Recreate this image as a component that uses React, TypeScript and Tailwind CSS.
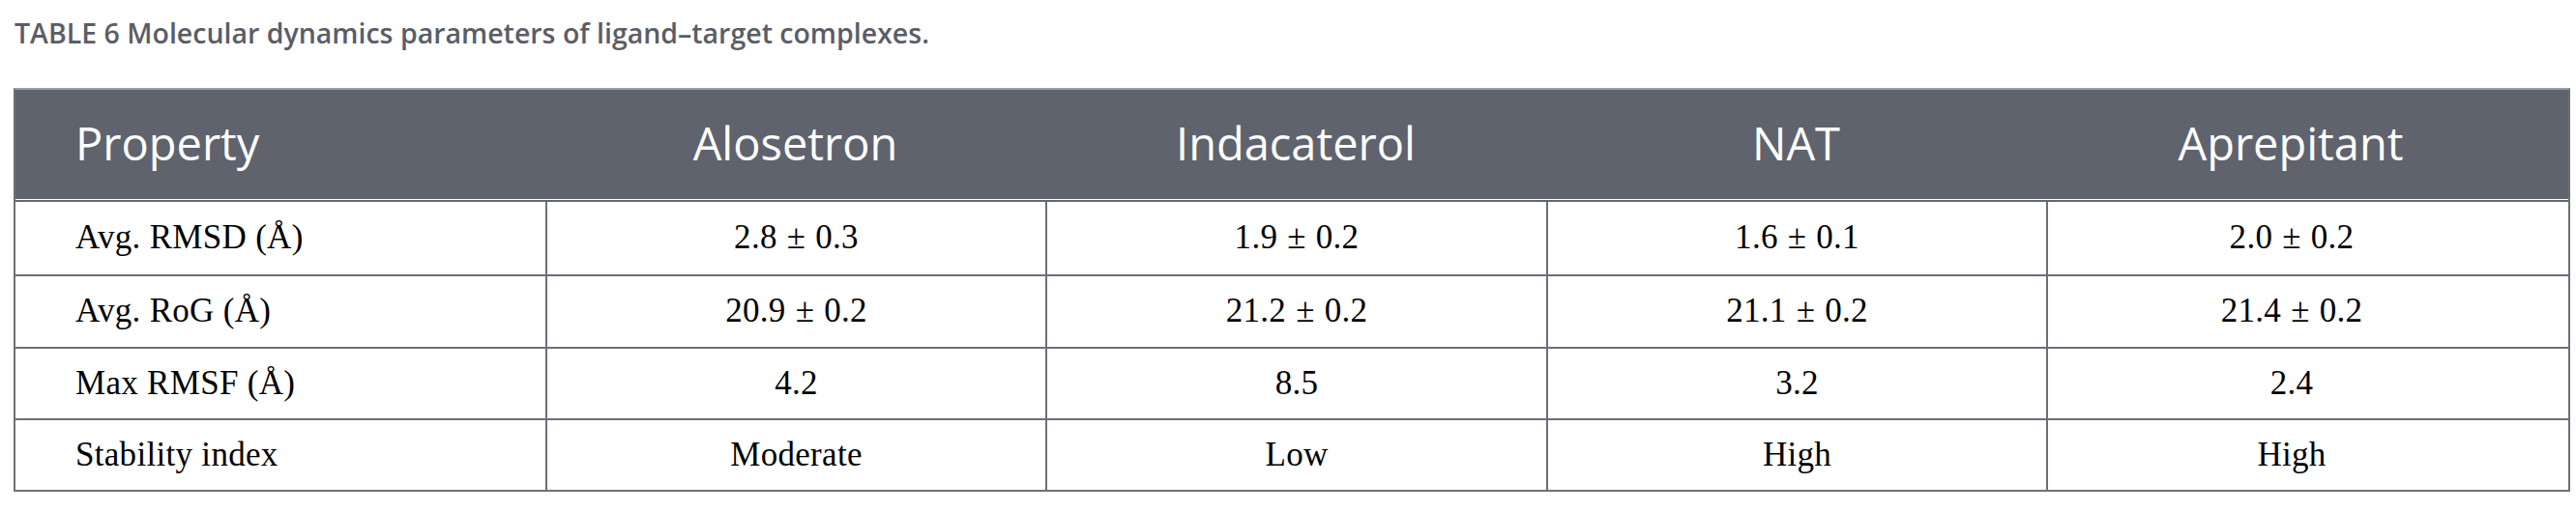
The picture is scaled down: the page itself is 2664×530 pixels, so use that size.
import React from "react";

// 표 데이터
const headers = ["Property", "Alosetron", "Indacaterol", "NAT", "Aprepitant"];

const rows: string[][] = [
  ["Avg. RMSD (Å)", "2.8 ± 0.3", "1.9 ± 0.2", "1.6 ± 0.1", "2.0 ± 0.2"],
  ["Avg. RoG (Å)", "20.9 ± 0.2", "21.2 ± 0.2", "21.1 ± 0.2", "21.4 ± 0.2"],
  ["Max RMSF (Å)", "4.2", "8.5", "3.2", "2.4"],
  ["Stability index", "Moderate", "Low", "High", "High"],
];

const gridCols = "grid grid-cols-[548px_517px_518px_517px_544px]";

// ± 기호 주변 여백을 넓혀서 렌더링
const Cell: React.FC<{ text: string }> = ({ text }) => {
  const parts = text.split(" ± ");
  if (parts.length < 2) return <>{text}</>;
  return (
    <>
      {parts[0]}
      <span className="mx-[10px]">±</span>
      {parts[1]}
    </>
  );
};

const App: React.FC = () => {
  return (
    <div className="w-[2664px] h-[530px] bg-white pl-[14px] pt-[15px]">
      {/* 캡션 */}
      <p className="font-['Open_Sans',sans-serif] text-[28.5px] leading-[38px] font-semibold text-[#5a5d67] pl-[1px]">
        TABLE 6 Molecular dynamics parameters of ligand–target complexes.
      </p>

      {/* 표 */}
      <div className="mt-[38px] w-[2644px] border-2 border-[#6b6f79] border-t-[#9a9da4]">
        <div
          className={`${gridCols} h-[114px] bg-[#5f636e] border-b border-white shadow-[0_2px_0_#646873] mb-[2px] font-['Open_Sans',sans-serif] text-[47px] text-white`}
        >
          {headers.map((h, i) => (
            <div
              key={h}
              className={`flex items-center pb-[2px] ${
                i === 0 ? "justify-start pl-[62px]" : i === 4 ? "justify-center pr-[38px]" : "justify-center"
              }`}
            >
              {h}
            </div>
          ))}
        </div>
        {rows.map((row, r) => (
          <div
            key={r}
            className={`${gridCols} ${r < 2 ? "h-[75px]" : "h-[74px]"} ${
              r > 0 ? "border-t-2 border-[#6b6f79]" : ""
            } font-['Liberation_Serif',serif] text-[35px] tracking-[0.3px] text-black`}
          >
            {row.map((cell, c) => (
              <div
                key={c}
                className={`flex items-center ${
                  c === 0
                    ? "justify-start pl-[62px]"
                    : c === 4
                    ? "justify-center border-l-2 border-[#6b6f79] pr-[38px]"
                    : "justify-center border-l-2 border-[#6b6f79]"
                }`}
              >
                <Cell text={cell} />
              </div>
            ))}
          </div>
        ))}
      </div>
    </div>
  );
};

export default App;
